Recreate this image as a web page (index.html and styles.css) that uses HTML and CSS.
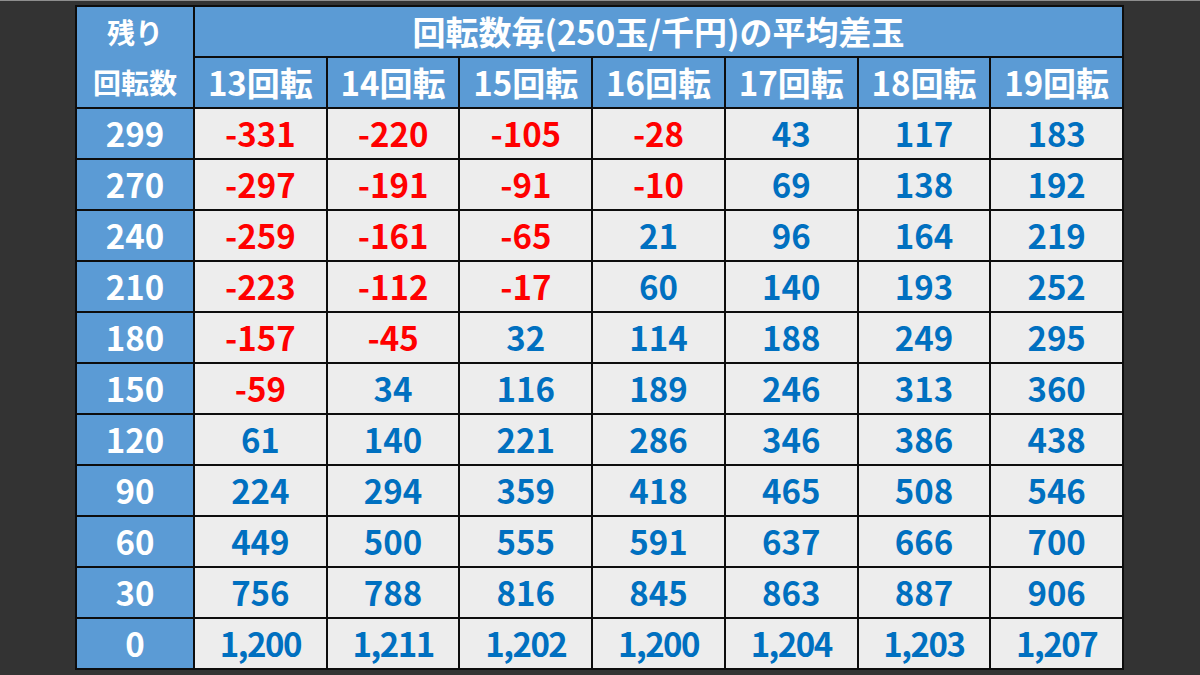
FILE: index.html
```html
<!DOCTYPE html>
<html lang="ja">
<head>
<meta charset="utf-8">
<title>回転数毎の平均差玉</title>
<link rel="stylesheet" href="styles.css">
</head>
<body>
<div class="sheet">
  <div class="grid">
    <div class="cell head corner"><span class="line">残り</span><span class="line">回転数</span></div>
    <div class="cell head title">回転数毎(250玉/千円)の平均差玉</div>
    <div class="cell head">13回転</div>
    <div class="cell head">14回転</div>
    <div class="cell head">15回転</div>
    <div class="cell head">16回転</div>
    <div class="cell head">17回転</div>
    <div class="cell head">18回転</div>
    <div class="cell head">19回転</div>

    <div class="cell head">299</div>
    <div class="cell neg">-331</div><div class="cell neg">-220</div><div class="cell neg">-105</div><div class="cell neg">-28</div><div class="cell pos">43</div><div class="cell pos">117</div><div class="cell pos">183</div>

    <div class="cell head">270</div>
    <div class="cell neg">-297</div><div class="cell neg">-191</div><div class="cell neg">-91</div><div class="cell neg">-10</div><div class="cell pos">69</div><div class="cell pos">138</div><div class="cell pos">192</div>

    <div class="cell head">240</div>
    <div class="cell neg">-259</div><div class="cell neg">-161</div><div class="cell neg">-65</div><div class="cell pos">21</div><div class="cell pos">96</div><div class="cell pos">164</div><div class="cell pos">219</div>

    <div class="cell head">210</div>
    <div class="cell neg">-223</div><div class="cell neg">-112</div><div class="cell neg">-17</div><div class="cell pos">60</div><div class="cell pos">140</div><div class="cell pos">193</div><div class="cell pos">252</div>

    <div class="cell head">180</div>
    <div class="cell neg">-157</div><div class="cell neg">-45</div><div class="cell pos">32</div><div class="cell pos">114</div><div class="cell pos">188</div><div class="cell pos">249</div><div class="cell pos">295</div>

    <div class="cell head">150</div>
    <div class="cell neg">-59</div><div class="cell pos">34</div><div class="cell pos">116</div><div class="cell pos">189</div><div class="cell pos">246</div><div class="cell pos">313</div><div class="cell pos">360</div>

    <div class="cell head">120</div>
    <div class="cell pos">61</div><div class="cell pos">140</div><div class="cell pos">221</div><div class="cell pos">286</div><div class="cell pos">346</div><div class="cell pos">386</div><div class="cell pos">438</div>

    <div class="cell head">90</div>
    <div class="cell pos">224</div><div class="cell pos">294</div><div class="cell pos">359</div><div class="cell pos">418</div><div class="cell pos">465</div><div class="cell pos">508</div><div class="cell pos">546</div>

    <div class="cell head">60</div>
    <div class="cell pos">449</div><div class="cell pos">500</div><div class="cell pos">555</div><div class="cell pos">591</div><div class="cell pos">637</div><div class="cell pos">666</div><div class="cell pos">700</div>

    <div class="cell head">30</div>
    <div class="cell pos">756</div><div class="cell pos">788</div><div class="cell pos">816</div><div class="cell pos">845</div><div class="cell pos">863</div><div class="cell pos">887</div><div class="cell pos">906</div>

    <div class="cell head">0</div>
    <div class="cell pos long">1,200</div><div class="cell pos long">1,211</div><div class="cell pos long">1,202</div><div class="cell pos long">1,200</div><div class="cell pos long">1,204</div><div class="cell pos long">1,203</div><div class="cell pos long">1,207</div>
  </div>
</div>
</body>
</html>
```

FILE: styles.css
```css
html, body {
  margin: 0;
  padding: 0;
}

body {
  width: 1200px;
  height: 675px;
  background: #333333;
  border-top: 1px solid #8e8e8e;
  box-sizing: border-box;
  overflow: hidden;
  font-family: "Noto Sans CJK JP", "Noto Sans", sans-serif;
  font-weight: 700;
}

.sheet {
  padding: 4px 0 0 75px;
}

.grid {
  width: 1049px;
  box-sizing: border-box;
  display: grid;
  grid-template-columns: 116px repeat(7, 1fr);
  grid-auto-rows: 49px;
  gap: 2px;
  padding: 2px;
  background: #0d0d0d;
}

.cell {
  display: flex;
  align-items: center;
  justify-content: center;
  font-size: 33px;
  line-height: 1;
  background: #ededed;
  white-space: nowrap;
}

.head {
  background: #5b9bd5;
  color: #ffffff;
}

.corner {
  grid-row: span 2;
  flex-direction: column;
  justify-content: space-around;
  font-size: 28px;
}

.corner .line {
  display: flex;
  align-items: center;
  height: 49px;
}

.title {
  grid-column: span 7;
}

.neg {
  color: #ff0000;
}

.pos {
  color: #0070c0;
}

.long {
  letter-spacing: -1.5px;
}
```
